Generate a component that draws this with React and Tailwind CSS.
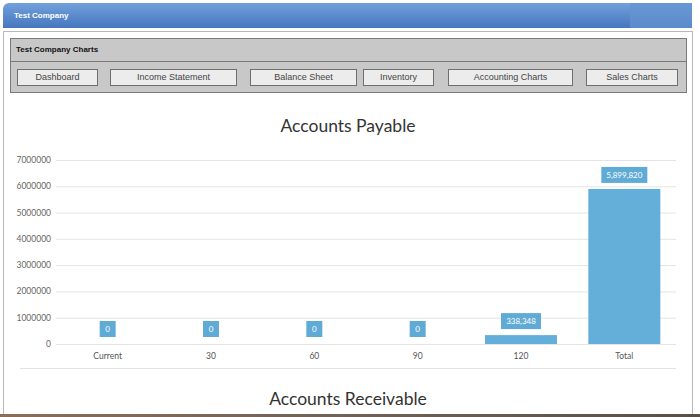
import React from "react";

const buttons = [
  { label: "Dashboard", cls: "w-[81px] ml-[6px]" },
  { label: "Income Statement", cls: "w-[127px] ml-[12px]" },
  { label: "Balance Sheet", cls: "w-[107px] ml-[13px]" },
  { label: "Inventory", cls: "w-[71px] ml-[6px]" },
  { label: "Accounting Charts", cls: "w-[125px] ml-[14px]" },
  { label: "Sales Charts", cls: "w-[92px] ml-[13px]" },
];

const data = [
  { name: "Current", value: 0, text: "0", box: 16 },
  { name: "30", value: 0, text: "0", box: 16 },
  { name: "60", value: 0, text: "0", box: 16 },
  { name: "90", value: 0, text: "0", box: 16 },
  { name: "120", value: 338348, text: "338,348", box: 40 },
  { name: "Total", value: 5899820, text: "5,899,820", box: 46 },
];

const ticks = [7000000, 6000000, 5000000, 4000000, 3000000, 2000000, 1000000, 0];

function yOf(v) {
  return 344 - (v / 7000000) * 184;
}

function PayableChart() {
  const left = 56;
  const right = 676;
  const step = (right - left) / data.length;
  return (
    <svg width="687" height="314" className="block" style={{ fontFamily: "Lato, 'Open Sans', sans-serif" }}>
      <g transform="translate(-4,-100)">
        <text x="348" y="132" textAnchor="middle" fontSize="17.5" fill="#333">
          Accounts Payable
        </text>
        {ticks.map((t) => (
          <g key={t}>
            <line x1={left} x2={right} y1={yOf(t) + 0.5} y2={yOf(t) + 0.5} stroke="#e4e4e4" />
            <text x="51" y={yOf(t) + 3} textAnchor="end" fontSize="8.5" fill="#666">
              {t}
            </text>
          </g>
        ))}
        {data.map((d, i) => {
          const cx = left + step * (i + 0.5);
          const top = yOf(d.value);
          const boxBottom = d.value === 0 ? 337 : top - 6;
          return (
            <g key={d.name}>
              {d.value > 0 && <rect x={cx - 36} y={top} width="72" height={344 - top} fill="#64afd9" />}
              <rect x={cx - d.box / 2} y={boxBottom - 16} width={d.box} height="16" fill="#5fabd6" />
              <text x={cx} y={boxBottom - 5} textAnchor="middle" fontSize="8" fill="#fff">
                {d.text}
              </text>
              <text x={cx} y="359" textAnchor="middle" fontSize="8.5" fill="#555">
                {d.name}
              </text>
            </g>
          );
        })}
        <line x1="20" x2={right} y1="368.5" y2="368.5" stroke="#e2e2e2" />
        <text x="348" y="405" textAnchor="middle" fontSize="17.5" fill="#333">
          Accounts Receivable
        </text>
      </g>
    </svg>
  );
}

export default function App() {
  return (
    <div
      className="w-[700px] h-[417px] bg-white overflow-hidden flex flex-col"
      style={{ fontFamily: "'Liberation Sans', Arial, sans-serif" }}
    >
      <div className="pt-[3px] pl-[3px] pr-[8px]">
        <div className="h-[25px] flex rounded-tl-[6px] overflow-hidden">
          <div className="flex-1 flex items-center pl-[11px] bg-gradient-to-b from-[#72a1dc] to-[#4676be]">
            <span className="text-white text-[8px] font-bold">Test Company</span>
          </div>
          <div className="w-[62px] bg-gradient-to-b from-[#6897d4] to-[#5a8bcb]" />
        </div>
      </div>
      <div className="flex-1 mt-[3px] ml-[3px] w-[690px] border-l border-r border-t border-[#b8b8b8] overflow-hidden">
        <div className="pt-[6px] pl-[6px]">
          <div className="w-[677px] bg-[#c8c8c8] border border-[#7a7a7a]">
            <div className="h-[23px] flex items-center pl-[5px] border-b border-[#7a7a7a]">
              <span className="text-[8px] font-bold text-[#111]">Test Company Charts</span>
            </div>
            <div className="flex items-center h-[30px] pt-[1px]">
              {buttons.map((b) => (
                <div
                  key={b.label}
                  className={`${b.cls} h-[17px] bg-[#ececec] border border-[#6f6f6f] flex items-center justify-center text-[9px] text-[#444]`}
                >
                  {b.label}
                </div>
              ))}
            </div>
          </div>
        </div>
        <div className="mt-[7px]">
          <PayableChart />
        </div>
      </div>
      <div className="h-[3px] bg-gradient-to-r from-[#8a6e58] via-[#6f6258] to-[#5a5048]" />
    </div>
  );
}
